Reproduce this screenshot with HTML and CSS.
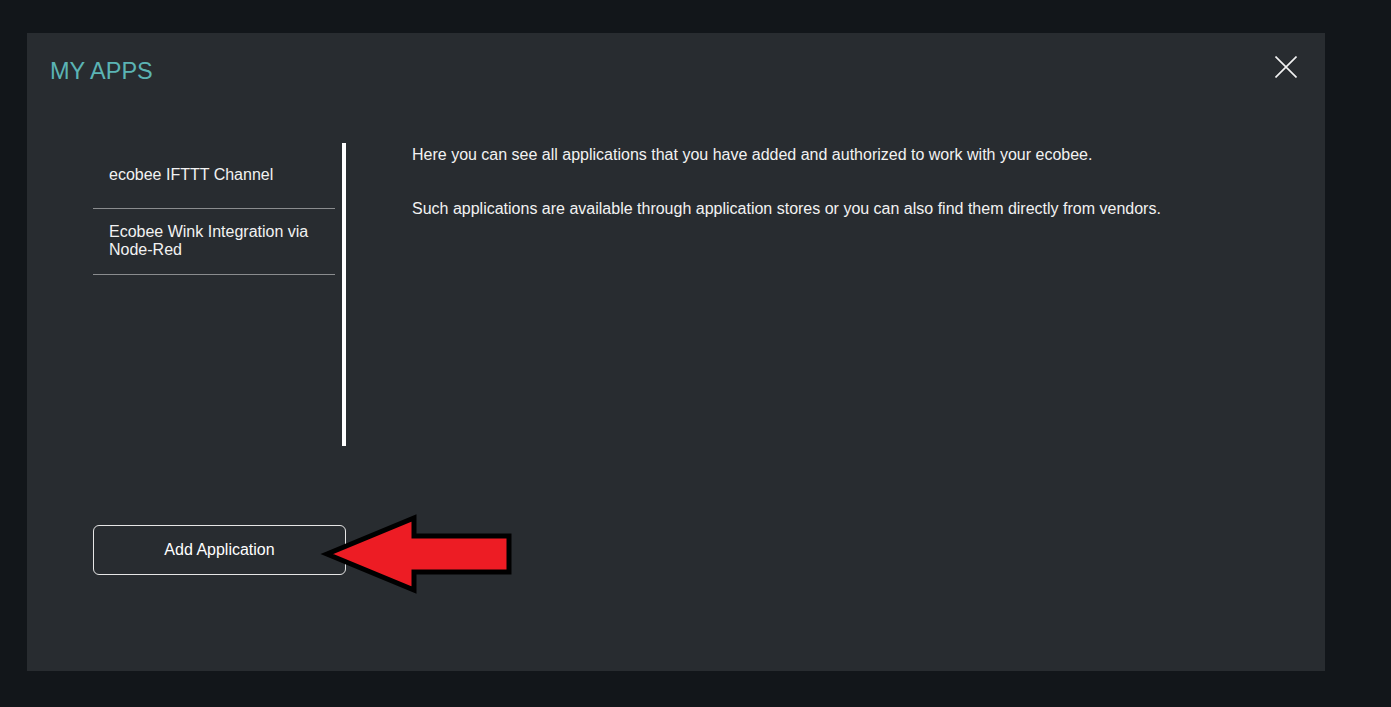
FILE: index.html
```html
<!DOCTYPE html>
<html lang="en">
<head>
<meta charset="utf-8">
<title>My Apps</title>
<link rel="stylesheet" href="styles.css">
</head>
<body>
<div class="modal">
  <header class="modal-head">
    <h1 class="modal-title">MY APPS</h1>
    <button class="close" aria-label="Close">
      <svg width="22" height="22" viewBox="0 0 22 22"><path d="M0.5 0.5 L21.5 21.5 M21.5 0.5 L0.5 21.5" stroke="#f2f2f2" stroke-width="1.6" fill="none"/></svg>
    </button>
  </header>
  <section class="modal-body">
    <nav class="sidebar">
      <ul class="app-list">
        <li class="app-item">ecobee IFTTT Channel</li>
        <li class="app-item">Ecobee Wink Integration via Node-Red</li>
      </ul>
    </nav>
    <div class="intro">
      <p>Here you can see all applications that you have added and authorized to work with your ecobee.</p>
      <p>Such applications are available through application stores or you can also find them directly from vendors.</p>
    </div>
  </section>
  <div class="actions">
    <button class="add-btn">Add Application</button>
  </div>
</div>
<svg class="arrow" width="205" height="90" viewBox="0 0 205 90">
  <polygon points="12,44 99,8 99,26 194,26 194,62 99,62 99,80" fill="#ed1c24" stroke="#000" stroke-width="5" stroke-linejoin="miter" stroke-miterlimit="4"/>
</svg>
</body>
</html>
```
FILE: styles.css
```css
html, body {
  margin: 0;
  padding: 0;
}
body {
  background: #12161a;
  font-family: "Liberation Sans", Arial, sans-serif;
  color: #f2f2f2;
  width: 1391px;
  height: 707px;
  position: relative;
  overflow: hidden;
  padding: 33px 0 0 27px;
  box-sizing: border-box;
}
.modal {
  width: 1298px;
  height: 638px;
  background: #282c30;
  box-sizing: border-box;
  padding: 23px 28px 0 23px;
}
.modal-head {
  display: flex;
  justify-content: space-between;
  align-items: flex-start;
}
.modal-title {
  margin: 0;
  padding-top: 1px;
  font-weight: normal;
  font-size: 23.5px;
  line-height: 28px;
  color: #5bb4b4;
}
.close {
  background: none;
  border: 0;
  padding: 0;
  width: 22px;
  height: 22px;
  display: block;
  cursor: pointer;
}
.close svg {
  display: block;
}
.modal-body {
  display: flex;
  margin-top: 58px;
  padding-left: 43px;
}
.sidebar {
  width: 253px;
  height: 303px;
  box-sizing: border-box;
  padding-right: 7px;
  border-right: 4px solid #ffffff;
  flex-shrink: 0;
}
.app-list {
  list-style: none;
  margin: 0;
  padding: 0;
}
.app-item {
  box-sizing: border-box;
  height: 66px;
  border-bottom: 1px solid #8a8c8e;
  display: flex;
  align-items: center;
  padding: 0 16px 1px;
  font-size: 16px;
  line-height: 18px;
}
.intro {
  margin-left: 66px;
  padding-top: 3px;
  font-size: 16px;
  line-height: 18px;
}
.intro p {
  margin: 0 0 36px;
}
.actions {
  padding-left: 43px;
  margin-top: 79px;
}
.add-btn {
  width: 253px;
  height: 50px;
  background: transparent;
  border: 1px solid #e6e6e6;
  border-radius: 6px;
  color: #ffffff;
  font-family: "Liberation Sans", Arial, sans-serif;
  font-size: 16px;
  cursor: pointer;
}
.arrow {
  position: absolute;
  left: 315px;
  top: 510px;
  pointer-events: none;
}
```
